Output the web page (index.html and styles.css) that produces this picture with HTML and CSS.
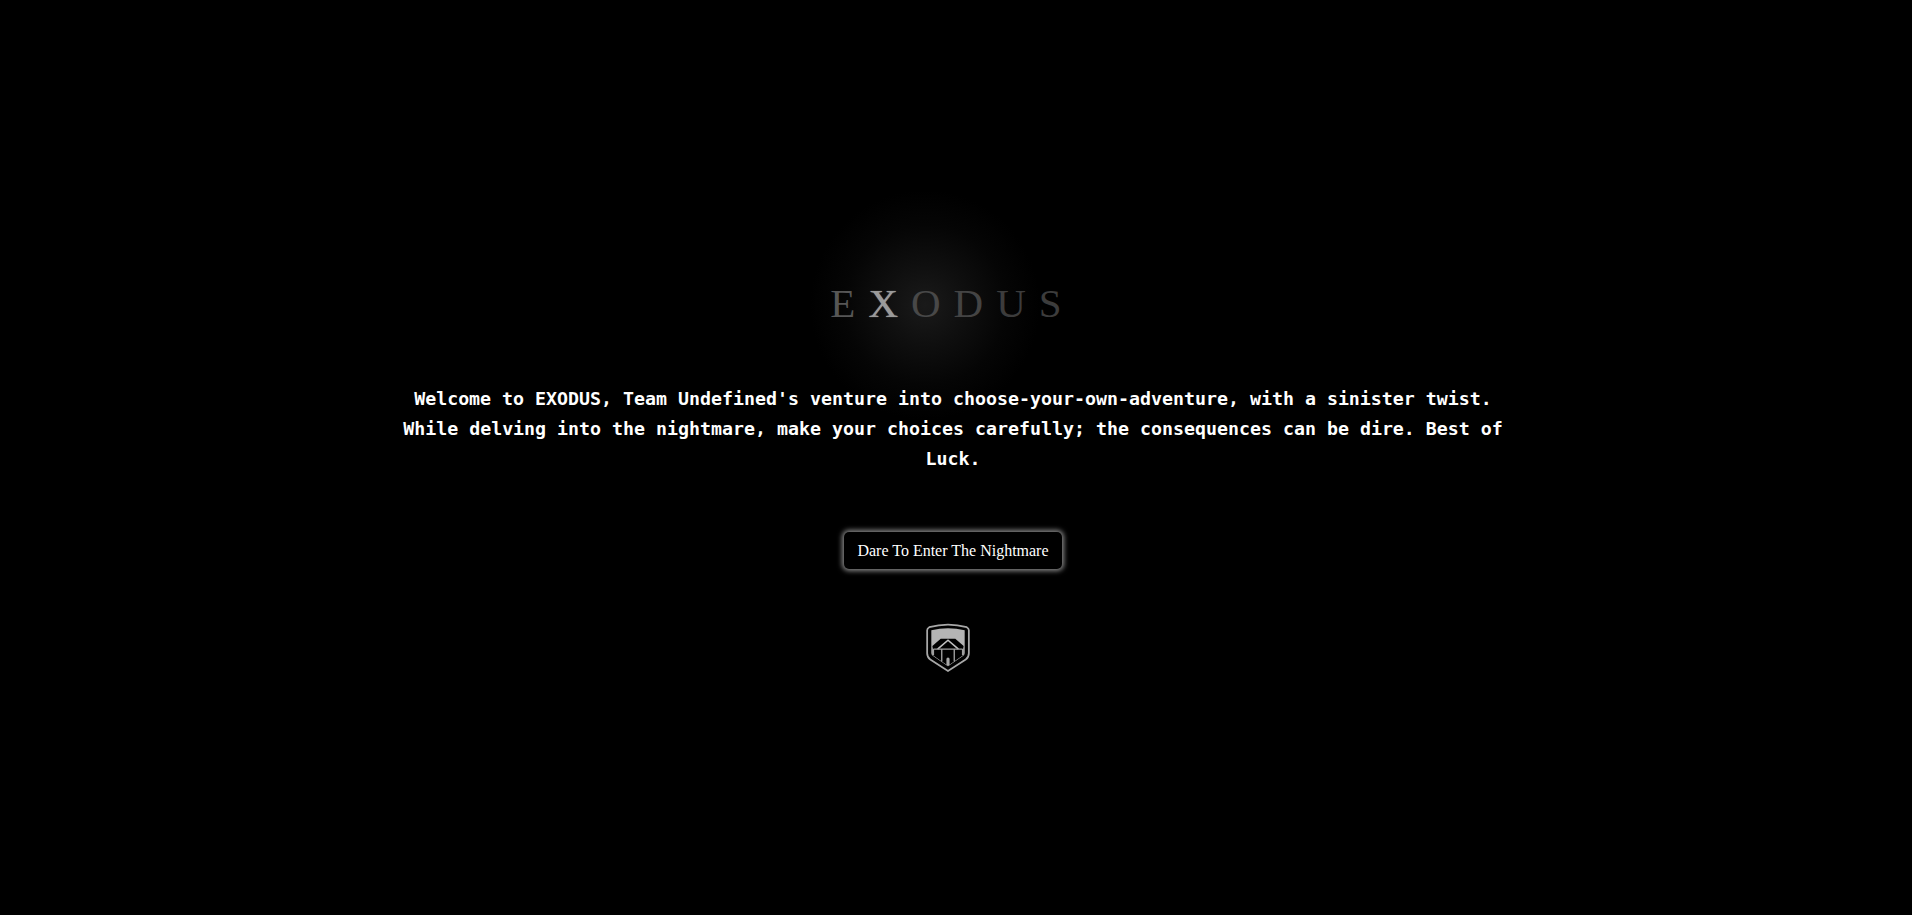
FILE: index.html
```html
<!DOCTYPE html>
<html lang="en">
<head>
    <meta charset="UTF-8">
    <meta name="viewport" content="width=device-width, initial-scale=1.0">
    <title>EXODUS</title>
    <link rel="stylesheet" href="styles.css">
</head>
<body>
    <div class="intro">
        <div class="title-wrap">
            <div class="glow"></div>
            <h1 class="title"><span class="l-e">E</span><span class="l-x">X</span><span class="l-o">O</span><span class="l-d">D</span><span class="l-u">U</span><span class="l-s">S</span></h1>
        </div>
        <p class="welcome">Welcome to EXODUS, Team Undefined's venture into choose-your-own-adventure, with a sinister twist. While delving into the nightmare, make your choices carefully; the consequences can be dire. Best of Luck.</p>
        <button class="enter">Dare To Enter The Nightmare</button>
        <svg class="logo" width="44" height="49" viewBox="0 0 42 47">
            <path d="M3 4 Q21 -1 39 4 Q41 5 41 7 L41 29 Q41 33 38 35 L21 46 L4 35 Q1 33 1 29 L1 7 Q1 5 3 4 Z" fill="none" stroke="#a8a8a8" stroke-width="1.7"/>
            <path d="M5 7 Q21 3 37 7 L37 29 Q37 31 35 32 L21 41.5 L7 32 Q5 31 5 29 Z" fill="#b4b4b4"/>
            <path d="M6.5 25 L6.5 31 L21 41 L35.5 31 L35.5 25 L36 22 L28 15 L14 15 L6 22 Z" fill="#000"/>
            <path d="M11 25 L21 16.5 L31 25" fill="none" stroke="#c0c0c0" stroke-width="1.5"/>
            <path d="M7 25 L35 25 M15 25 L15 37 M27 25 L27 37 M7 25 L7 31 M35 25 L35 31" fill="none" stroke="#a0a0a0" stroke-width="1.3"/>
            <rect x="19.5" y="33" width="3" height="8" rx="1.5" fill="#a8a8a8"/>
        </svg>
    </div>
</body>
</html>
```

FILE: styles.css
```css
body {
    margin: 0;
    height: 915px;
    overflow: hidden;
    background: #000;
    color: #fff;
}
.intro {
    display: flex;
    flex-direction: column;
    align-items: center;
    padding-top: 280px;
    padding-right: 6px;
}
.title-wrap {
    position: relative;
    margin-left: -1px;
}
/* sits behind the paragraph too */
.glow {
    position: absolute;
    z-index: -1;
    left: -60px;
    top: -100px;
    width: 310px;
    height: 250px;
    background: radial-gradient(circle 115px at 50% 50%, #1a1a1a 0%, #0f0f0f 35%, #050505 70%, #000 100%);
}
.title {
    margin: 0;
    font-family: "Liberation Serif", serif;
    font-size: 41px;
    font-weight: normal;
    line-height: 47px;
    letter-spacing: 13px;
}
.l-e { color: #565656; }
.l-x { color: #9a9a9a; text-shadow: 0 0 1px #9a9a9a; }
.l-o { color: #484848; }
.l-d { color: #444; }
.l-u { color: #3c3c3c; }
.l-s { color: #3c3c3c; }
.welcome {
    width: 1120px;
    margin: 57px 0 0;
    font-family: "DejaVu Sans Mono", monospace;
    font-size: 18.27px;
    font-weight: bold;
    line-height: 30px;
    text-align: center;
}
.enter {
    width: 218px;
    height: 37px;
    margin-top: 58px;
    padding: 0;
    background: #000;
    color: #fff;
    font-family: "Liberation Serif", serif;
    font-size: 16px;
    border: none;
    border-radius: 5px;
    box-shadow: 0 0 5px 2px #888;
}
.logo {
    display: block;
    margin-top: 54px;
    margin-left: -10px;
}
```
